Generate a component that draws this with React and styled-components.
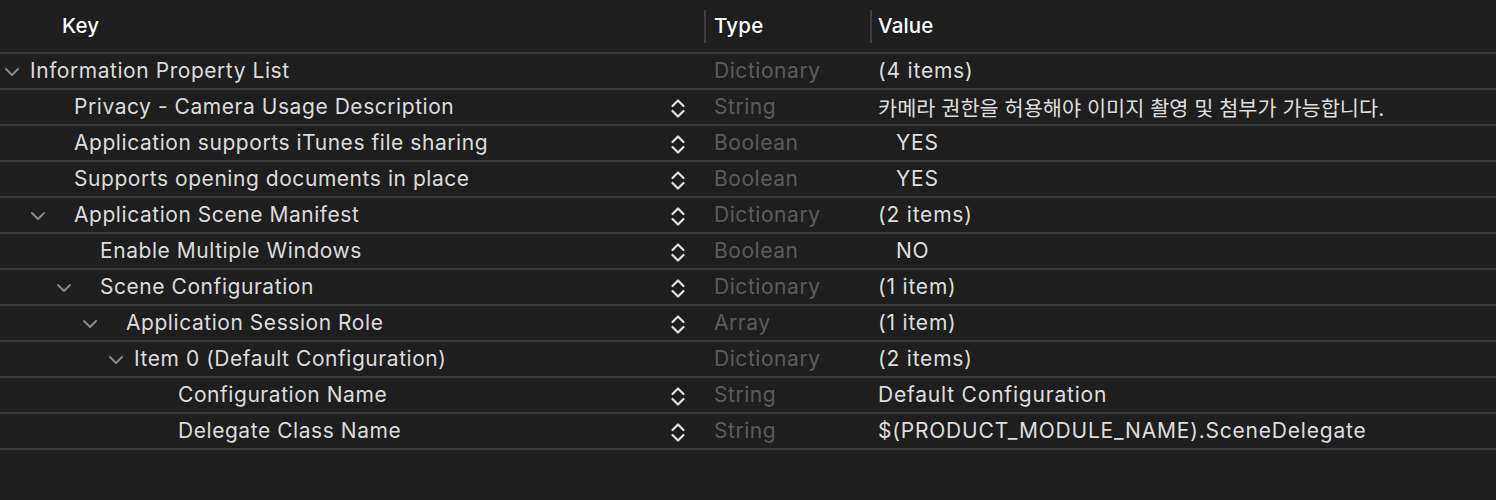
import React from 'react';
import styled, { createGlobalStyle } from 'styled-components';

const GlobalStyle = createGlobalStyle`
  html, body {
    margin: 0;
    padding: 0;
    background: #1e1e1e;
  }
  body {
    font-family: Inter, "Noto Sans", "Noto Sans CJK KR", sans-serif;
    -webkit-font-smoothing: antialiased;
  }
`;

const Table = styled.div`
  width: 1496px;
  height: 500px;
  background: #1e1e1e;
  overflow: hidden;
`;

const HeaderRow = styled.div`
  display: grid;
  grid-template-columns: 704px 166px 1fr;
  height: 52px;
  border-bottom: 2px solid #383838;
  align-items: center;
`;

const HeaderCell = styled.div`
  height: 32px;
  display: flex;
  align-items: center;
  padding-left: ${(p) => p.$pad}px;
  padding-bottom: 1px;
  border-left: ${(p) => (p.$divider ? '2px solid #3f3f3f' : 'none')};
  color: #ffffff;
  font-size: 20.5px;
  font-weight: 500;
  letter-spacing: 0.2px;
`;

const Row = styled.div`
  display: grid;
  grid-template-columns: 704px 166px 1fr;
  height: 33px;
  padding-bottom: 1px;
  border-bottom: 2px solid #383838;
  align-items: center;
  font-size: 21px;
  letter-spacing: 0.55px;
`;

const KeyCell = styled.div`
  position: relative;
  display: flex;
  align-items: center;
  height: 100%;
  padding-left: ${(p) => p.$text}px;
  color: #dcdcdc;
`;

const Disclosure = styled.svg`
  position: absolute;
  left: ${(p) => p.$left}px;
  top: 50%;
  margin-top: -4px;
  width: 16px;
  height: 10px;
`;

const Stepper = styled.svg`
  position: absolute;
  right: 18px;
  top: 50%;
  margin-top: -9px;
  width: 16px;
  height: 21px;
`;

const TypeCell = styled.div`
  padding-left: 10px;
  color: #5c5c5c;
`;

const ValueCell = styled.div`
  padding-left: ${(p) => (p.$popup ? 26 : 8)}px;
  color: #dedede;
  white-space: nowrap;
  letter-spacing: ${(p) => (p.$cjk ? '0' : '0.8px')};
  font-size: ${(p) => (p.$cjk ? '20.8px' : '21px')};
`;

const Chevron = ({ left }) => (
  <Disclosure $left={left} viewBox="0 0 16 10">
    <path d="M2 2 L8 8 L14 2" fill="none" stroke="#8a8a8a" strokeWidth="2" strokeLinecap="round" strokeLinejoin="round" />
  </Disclosure>
);

const UpDown = () => (
  <Stepper viewBox="0 0 16 21">
    <path d="M2.5 8 L8 2.5 L13.5 8" fill="none" stroke="#e0e0e0" strokeWidth="2.2" strokeLinecap="round" strokeLinejoin="round" />
    <path d="M2.5 13 L8 18.5 L13.5 13" fill="none" stroke="#e0e0e0" strokeWidth="2.2" strokeLinecap="round" strokeLinejoin="round" />
  </Stepper>
);

const rows = [
  { key: 'Information Property List', text: 30, chevron: 4, type: 'Dictionary', value: '(4 items)' },
  { key: 'Privacy - Camera Usage Description', text: 74, stepper: true, type: 'String', value: '카메라 권한을 허용해야 이미지 촬영 및 첨부가 가능합니다.', cjk: true },
  { key: 'Application supports iTunes file sharing', text: 74, stepper: true, type: 'Boolean', value: 'YES', popup: true },
  { key: 'Supports opening documents in place', text: 74, stepper: true, type: 'Boolean', value: 'YES', popup: true },
  { key: 'Application Scene Manifest', text: 74, chevron: 30, stepper: true, type: 'Dictionary', value: '(2 items)' },
  { key: 'Enable Multiple Windows', text: 100, stepper: true, type: 'Boolean', value: 'NO', popup: true },
  { key: 'Scene Configuration', text: 100, chevron: 56, stepper: true, type: 'Dictionary', value: '(1 item)' },
  { key: 'Application Session Role', text: 126, chevron: 82, stepper: true, type: 'Array', value: '(1 item)' },
  { key: 'Item 0 (Default Configuration)', text: 134, chevron: 108, type: 'Dictionary', value: '(2 items)' },
  { key: 'Configuration Name', text: 178, stepper: true, type: 'String', value: 'Default Configuration' },
  { key: 'Delegate Class Name', text: 178, stepper: true, type: 'String', value: '$(PRODUCT_MODULE_NAME).SceneDelegate' },
];

export default function App() {
  return (
    <>
      <GlobalStyle />
      <Table>
        <HeaderRow>
          <HeaderCell $pad={62}>Key</HeaderCell>
          <HeaderCell $pad={8} $divider>Type</HeaderCell>
          <HeaderCell $pad={6} $divider>Value</HeaderCell>
        </HeaderRow>
        {rows.map((r) => (
          <Row key={r.key}>
            <KeyCell $text={r.text}>
              {r.chevron !== undefined && <Chevron left={r.chevron} />}
              {r.key}
              {r.stepper && <UpDown />}
            </KeyCell>
            <TypeCell>{r.type}</TypeCell>
            <ValueCell $popup={r.popup} $cjk={r.cjk}>{r.value}</ValueCell>
          </Row>
        ))}
      </Table>
    </>
  );
}
